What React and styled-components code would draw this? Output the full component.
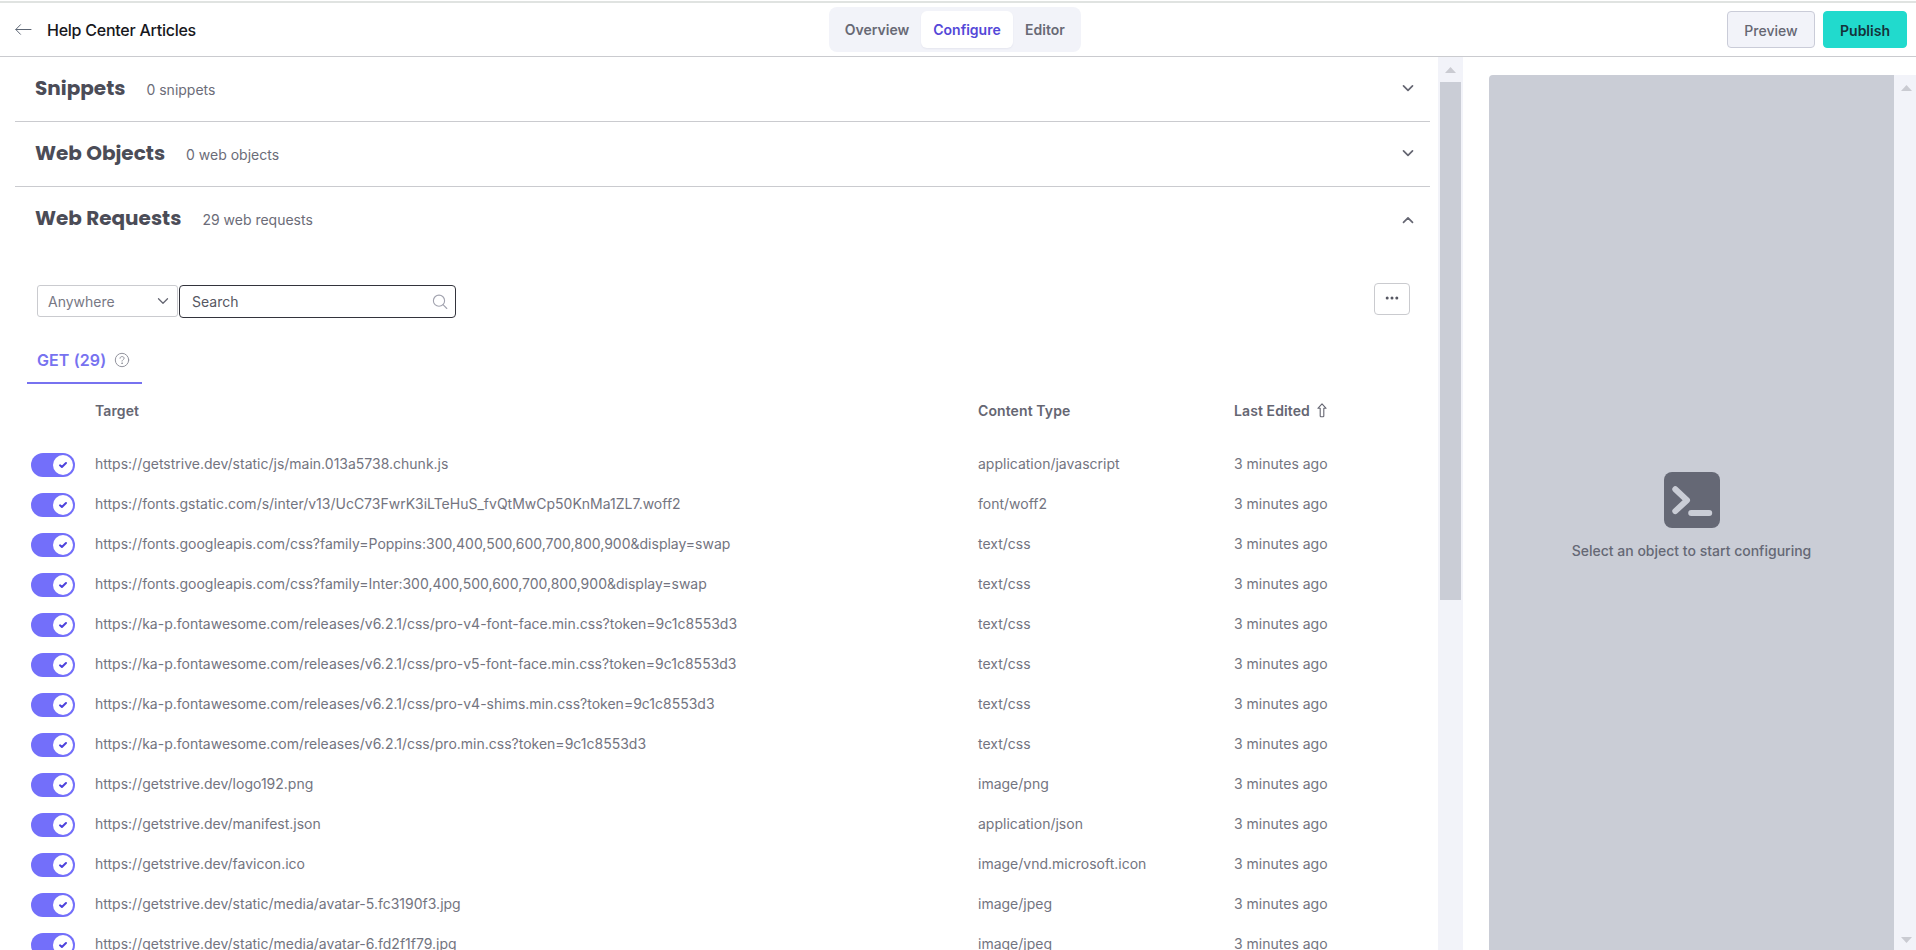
import React from 'react'
import styled, { createGlobalStyle } from 'styled-components'

const GlobalStyle = createGlobalStyle`
  * {
    box-sizing: border-box;
  }

  body {
    margin: 0;
    background: #fff;
    color: #6b6c78;
    font-family: Inter, sans-serif;
    font-size: 14px;
    overflow: hidden;
  }

  button,
  input {
    font-family: inherit;
  }
`

const Page = styled.div`
  display: flex;
  flex-direction: column;
  height: 950px;
  overflow: hidden;
`

const Header = styled.header`
  display: grid;
  grid-template-columns: 1fr auto 1fr;
  align-items: center;
  height: 57px;
  flex-shrink: 0;
  padding: 3px 9px 0 15px;
  border-bottom: 1px solid #cacbcf;
  background: linear-gradient(#fff 1px, #e0e3e1 1px, #e0e3e1 3px, #fff 3px);
`

const HeaderLeft = styled.div`
  display: flex;
  align-items: center;
  gap: 15px;
`

const PageTitle = styled.h1`
  margin: 1px 0 0;
  color: #17171c;
  font-size: 16px;
  font-weight: 500;
  line-height: 20px;
  letter-spacing: -0.25px;
`

const Tabs = styled.nav`
  display: flex;
  align-items: center;
  width: 252px;
  height: 45px;
  margin-right: 12px;
  padding: 0 4px;
  border-radius: 8px;
  background: #f2f3f9;
`

const Tab = styled.button`
  width: ${props => props.$width};
  height: 37px;
  padding: 0;
  border: 0;
  border-radius: 6px;
  background: ${props => props.$active ? '#fff' : 'transparent'};
  color: ${props => props.$active ? '#5448d8' : '#686975'};
  box-shadow: ${props => props.$active ? '0 1px 2px rgba(40, 40, 80, 0.06)' : 'none'};
  font-size: 14px;
  font-weight: 600;
`

const HeaderRight = styled.div`
  display: flex;
  justify-content: flex-end;
  gap: 8px;
`

const ActionButton = styled.button`
  width: ${props => props.$primary ? '84px' : '88px'};
  height: 37px;
  padding: 2px 0 0;
  border: 1px solid ${props => props.$primary ? '#21dacd' : '#caccd8'};
  border-radius: 4px;
  background: ${props => props.$primary ? '#21dacd' : '#f2f3f9'};
  color: ${props => props.$primary ? '#15323a' : '#656672'};
  font-size: 14px;
  font-weight: ${props => props.$primary ? 600 : 500};
`

const Main = styled.main`
  display: flex;
  flex: 1;
  min-height: 0;
`

const Content = styled.div`
  width: 1438px;
  padding: 0 8px 0 15px;
  overflow: hidden;
`

const SectionHeader = styled.div`
  display: flex;
  align-items: baseline;
  height: 65px;
  padding: 16px 16px 0 20px;
  border-bottom: 1px solid ${props => props.$open ? 'transparent' : '#cacbcf'};
`

const SectionTitle = styled.h2`
  margin: 0 21px 0 0;
  color: #4b4c57;
  font-family: Poppins, Inter, sans-serif;
  font-size: 20px;
  font-weight: 700;
  line-height: 30px;
  white-space: nowrap;
`

const SectionCount = styled.span`
  flex: 1;
  color: #6b6c78;
`

const ChevronSlot = styled.span`
  display: flex;
  align-self: flex-start;
  padding-top: ${props => props.$open ? '11px' : '9px'};
`

const Filters = styled.div`
  display: flex;
  align-items: flex-start;
  margin: 31px 20px 0 22px;
  height: 35px;
`

const Select = styled.div`
  display: flex;
  align-items: center;
  justify-content: space-between;
  width: 141px;
  height: 32px;
  margin: 2px 1px 0 0;
  padding: 0 8px 0 10px;
  border: 1px solid #cacbcf;
  border-radius: 3px;
  color: #777884;
`

const SearchField = styled.label`
  display: flex;
  align-items: center;
  width: 277px;
  height: 33px;
  margin-top: 2px;
  padding: 0 7px 0 12px;
  border: 1px solid #33343c;
  border-radius: 4px;
`

const SearchInput = styled.input`
  flex: 1;
  min-width: 0;
  padding: 0 0 1px;
  border: 0;
  outline: 0;
  background: transparent;
  font-size: 14px;

  &::placeholder {
    color: #565762;
    opacity: 1;
  }
`

const MoreButton = styled.button`
  display: flex;
  align-items: center;
  justify-content: center;
  width: 36px;
  height: 32px;
  margin-left: auto;
  padding: 0 0 2px;
  border: 1px solid #cacbcf;
  border-radius: 4px;
  background: #fff;
`

const MethodTab = styled.div`
  display: flex;
  align-items: center;
  gap: 8px;
  width: 115px;
  height: 46px;
  margin: 20px 0 0 12px;
  padding: 0 0 1px 10px;
  border-bottom: 2px solid #7772f0;
  color: #7772f0;
  font-size: 16px;
  font-weight: 600;
  letter-spacing: 0.1px;
`

const Table = styled.div`
  margin-left: 16px;
`

const TableRow = styled.div`
  display: grid;
  grid-template-columns: 64px 883px 256px 1fr;
  align-items: center;
  height: 40px;
  color: #737480;
`

const TableHead = styled(TableRow)`
  height: 54px;
  margin-bottom: 7px;
  color: #656672;
  font-weight: 600;
  letter-spacing: 0.1px;
`

const Cell = styled.span`
  display: flex;
  align-items: center;
  gap: 7px;
  padding-bottom: ${props => props.$head ? '1px' : '3px'};
  white-space: nowrap;
`

const Toggle = styled.span`
  display: flex;
  align-items: center;
  justify-content: flex-end;
  width: 44px;
  height: 24px;
  padding: 2px;
  border-radius: 12px;
  background: #736ffa;
`

const Knob = styled.span`
  display: flex;
  align-items: center;
  justify-content: center;
  width: 20px;
  height: 20px;
  border-radius: 50%;
  background: #fff;
`

const Scrollbar = styled.div`
  display: flex;
  flex-direction: column;
  align-items: center;
  flex-shrink: 0;
  width: ${props => props.$width};
  padding: 10px 0 7px ${props => props.$inset || '0'};
  background: #f2f3f9;
`

const ScrollThumb = styled.div`
  width: 21px;
  height: 518px;
  margin: 9px 0 0;
  background: #cacdd6;
`

const ArrowUp = styled.span`
  width: 11px;
  height: 6px;
  background: #cacbd2;
  clip-path: polygon(50% 0, 100% 100%, 0 100%);
`

const ArrowDown = styled(ArrowUp)`
  margin-top: auto;
  clip-path: polygon(0 0, 100% 0, 50% 100%);
`

const Inspector = styled.aside`
  display: flex;
  flex: 1;
  margin: 18px 0 0 26px;
`

const EmptyState = styled.div`
  display: flex;
  flex-direction: column;
  align-items: center;
  flex: 1;
  padding-top: 397px;
  border-radius: 4px 0 0 0;
  background: #cacdd6;
  color: #656875;
  font-weight: 500;
`

const EmptyText = styled.p`
  margin: 14px 0 0;
  line-height: 18px;
`

const Chevron = ({ up, weight = 1.7 }) => (
  <svg width="12" height="12" viewBox="0 0 12 12" fill="none" stroke="#656672" strokeWidth={weight} strokeLinecap="round" strokeLinejoin="round">
    <path d={up ? 'M1.5 8.3 6 3.8l4.5 4.5' : 'M1.5 3.8 6 8.3l4.5-4.5'} />
  </svg>
)

const BackIcon = () => (
  <svg width="17" height="12" viewBox="0 0 17 12" fill="none" stroke="#5d6674" strokeWidth="1" strokeLinecap="round" strokeLinejoin="round">
    <path d="M5.5 .7.8 5.5l4.7 4.8M1 5.5h15" />
  </svg>
)

const SearchIcon = () => (
  <svg width="16" height="16" viewBox="0 0 16 16" fill="none" stroke="#a2a3af" strokeWidth="1.1" strokeLinecap="round">
    <circle cx="7" cy="6.7" r="5.6" />
    <path d="m11 10.7 3.8 3.8" />
  </svg>
)

const HelpIcon = () => (
  <svg width="16" height="16" viewBox="0 0 16 16" fill="none" stroke="#92939d" strokeLinecap="round" strokeLinejoin="round">
    <circle cx="8" cy="8" r="6.7" />
    <path d="M6 6.3c0-1 .8-1.7 1.9-1.7h.3c1.1 0 1.9.7 1.9 1.7 0 1.3-2.1 1.5-2.1 2.8" />
    <circle cx="8" cy="11.2" r=".3" fill="#92939d" />
  </svg>
)

const MoreIcon = () => (
  <svg width="14" height="4" viewBox="0 0 14 4" fill="#565762">
    <circle cx="2.2" cy="2" r="1.5" />
    <circle cx="7" cy="2" r="1.5" />
    <circle cx="11.8" cy="2" r="1.5" />
  </svg>
)

const SortIcon = () => (
  <svg width="10" height="15" viewBox="0 0 10 15" fill="none" stroke="#656672" strokeWidth="1.1" strokeLinejoin="round">
    <path d="M5 .8.9 5.3h2.3V13q0 .8.8.8h2q.8 0 .8-.8V5.3h2.3z" />
  </svg>
)

const CheckIcon = () => (
  <svg width="10" height="8" viewBox="0 0 10 8" fill="none" stroke="#4d43dc" strokeWidth="2" strokeLinecap="round" strokeLinejoin="round">
    <path d="M2 4.3 3.9 6 8 2" />
  </svg>
)

const TerminalIcon = () => (
  <svg width="56" height="56" viewBox="0 0 56 56" fill="none">
    <rect width="56" height="56" rx="8" fill="#656875" />
    <path d="m11.3 17.3 11.7 10.9-11.7 10.9M27.2 41h18" stroke="#cacdd6" strokeWidth="6" strokeLinecap="round" strokeLinejoin="round" />
  </svg>
)

const requests = [
  ['https://getstrive.dev/static/js/main.013a5738.chunk.js', 'application/javascript'],
  ['https://fonts.gstatic.com/s/inter/v13/UcC73FwrK3iLTeHuS_fvQtMwCp50KnMa1ZL7.woff2', 'font/woff2'],
  ['https://fonts.googleapis.com/css?family=Poppins:300,400,500,600,700,800,900&display=swap', 'text/css'],
  ['https://fonts.googleapis.com/css?family=Inter:300,400,500,600,700,800,900&display=swap', 'text/css'],
  ['https://ka-p.fontawesome.com/releases/v6.2.1/css/pro-v4-font-face.min.css?token=9c1c8553d3', 'text/css'],
  ['https://ka-p.fontawesome.com/releases/v6.2.1/css/pro-v5-font-face.min.css?token=9c1c8553d3', 'text/css'],
  ['https://ka-p.fontawesome.com/releases/v6.2.1/css/pro-v4-shims.min.css?token=9c1c8553d3', 'text/css'],
  ['https://ka-p.fontawesome.com/releases/v6.2.1/css/pro.min.css?token=9c1c8553d3', 'text/css'],
  ['https://getstrive.dev/logo192.png', 'image/png'],
  ['https://getstrive.dev/manifest.json', 'application/json'],
  ['https://getstrive.dev/favicon.ico', 'image/vnd.microsoft.icon'],
  ['https://getstrive.dev/static/media/avatar-5.fc3190f3.jpg', 'image/jpeg'],
  ['https://getstrive.dev/static/media/avatar-6.fd2f1f79.jpg', 'image/jpeg'],
]

const sections = [
  { title: 'Snippets', count: '0 snippets' },
  { title: 'Web Objects', count: '0 web objects' },
  { title: 'Web Requests', count: '29 web requests', open: true },
]

export default function App() {
  return (
    <>
      <GlobalStyle />
      <Page>
        <Header>
          <HeaderLeft>
            <BackIcon />
            <PageTitle>Help Center Articles</PageTitle>
          </HeaderLeft>
          <Tabs>
            <Tab $width="88px">Overview</Tab>
            <Tab $width="92px" $active>Configure</Tab>
            <Tab $width="64px">Editor</Tab>
          </Tabs>
          <HeaderRight>
            <ActionButton>Preview</ActionButton>
            <ActionButton $primary>Publish</ActionButton>
          </HeaderRight>
        </Header>
        <Main>
          <Content>
            {sections.map(section => (
              <SectionHeader key={section.title} $open={section.open}>
                <SectionTitle>{section.title}</SectionTitle>
                <SectionCount>{section.count}</SectionCount>
                <ChevronSlot $open={section.open}>
                  <Chevron up={section.open} />
                </ChevronSlot>
              </SectionHeader>
            ))}
            <Filters>
              <Select>
                Anywhere
                <Chevron weight={1.3} />
              </Select>
              <SearchField>
                <SearchInput placeholder="Search" />
                <SearchIcon />
              </SearchField>
              <MoreButton>
                <MoreIcon />
              </MoreButton>
            </Filters>
            <MethodTab>
              GET (29)
              <HelpIcon />
            </MethodTab>
            <Table>
              <TableHead>
                <span />
                <Cell $head>Target</Cell>
                <Cell $head>Content Type</Cell>
                <Cell $head>
                  Last Edited
                  <SortIcon />
                </Cell>
              </TableHead>
              {requests.map(([target, type]) => (
                <TableRow key={target}>
                  <Toggle>
                    <Knob>
                      <CheckIcon />
                    </Knob>
                  </Toggle>
                  <Cell>{target}</Cell>
                  <Cell>{type}</Cell>
                  <Cell>3 minutes ago</Cell>
                </TableRow>
              ))}
            </Table>
          </Content>
          <Scrollbar $width="25px">
            <ArrowUp />
            <ScrollThumb />
          </Scrollbar>
          <Inspector>
            <EmptyState>
              <TerminalIcon />
              <EmptyText>Select an object to start configuring</EmptyText>
            </EmptyState>
            <Scrollbar $width="22px" $inset="3px">
              <ArrowUp />
              <ArrowDown />
            </Scrollbar>
          </Inspector>
        </Main>
      </Page>
    </>
  )
}
